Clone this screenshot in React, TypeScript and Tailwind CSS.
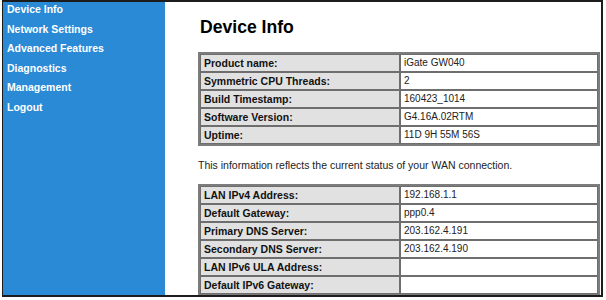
const menu = ['Device Info', 'Network Settings', 'Advanced Features', 'Diagnostics', 'Management', 'Logout'];

const deviceRows: [string, string][] = [
  ['Product name:', 'iGate GW040'],
  ['Symmetric CPU Threads:', '2'],
  ['Build Timestamp:', '160423_1014'],
  ['Software Version:', 'G4.16A.02RTM'],
  ['Uptime:', '11D 9H 55M 56S'],
];

const wanRows: [string, string][] = [
  ['LAN IPv4 Address:', '192.168.1.1'],
  ['Default Gateway:', 'ppp0.4'],
  ['Primary DNS Server:', '203.162.4.191'],
  ['Secondary DNS Server:', '203.162.4.190'],
  ['LAN IPv6 ULA Address:', ''],
  ['Default IPv6 Gateway:', ''],
];

const InfoTable = ({ rows }: { rows: [string, string][] }) => (
  <table className="w-[402px] border-separate border-spacing-0 border-2 border-[#7c7c7c]">
    <tbody>
      {rows.map(([label, value]) => (
        <tr key={label}>
          <td className="h-[18px] w-[200px] border border-[#6e6e6e] bg-[#e1e1e1] px-[3px] py-0 text-[10.5px] font-bold leading-[16px] text-[#111]">
            {label}
          </td>
          <td className="h-[18px] border border-[#6e6e6e] bg-white px-[3px] py-0 text-[10px] leading-[16px] text-[#222]">
            {value}
          </td>
        </tr>
      ))}
    </tbody>
  </table>
);

export default function App() {
  return (
    <div className="h-[300px] w-[606px] overflow-hidden bg-white" style={{ fontFamily: '"Liberation Sans", Arial, sans-serif' }}>
      <div className="ml-[2px] flex h-[297px] w-[601px] overflow-hidden border-y-2 border-l border-r-2 border-[#1c1c1c]">
        {/* Sidebar */}
        <div className="w-[162px] shrink-0 bg-[#2a8ad6] pl-[4px]">
          <ul className="-mt-[2px]">
            {menu.map(m => (
              <li key={m} className="text-[10.5px] font-bold leading-[19.5px] text-white">{m}</li>
            ))}
          </ul>
        </div>

        {/* Main */}
        <div className="flex-1 pl-[33px]">
          <h1 className="mt-[14px] pl-[2px] text-[17.6px] font-bold leading-[22px] text-black">Device Info</h1>
          <div className="mt-[14px]">
            <InfoTable rows={deviceRows} />
          </div>
          <p className="mt-[12px] text-[10.5px] leading-[14px] text-[#222]">
            This information reflects the current status of your WAN connection.
          </p>
          <div className="mt-[12px]">
            <InfoTable rows={wanRows} />
          </div>
        </div>
      </div>
    </div>
  );
}
